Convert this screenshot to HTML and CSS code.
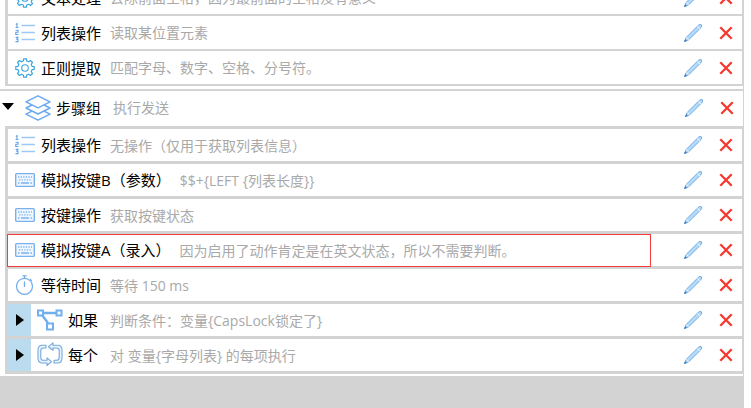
FILE: index.html
```html
<!DOCTYPE html>
<html lang="zh-CN">
<head>
  <meta charset="UTF-8" />
  <meta name="viewport" content="width=device-width, initial-scale=1.0" />
  <title>步骤组</title>
  <link rel="stylesheet" href="styles.css">
</head>
<body>
  <!-- shared icons -->
  <svg class="icon-defs" aria-hidden="true">
    <symbol id="gear" viewBox="0 0 20 20">
      <path d="M8.3 3 L8.6 .8 H11.4 L11.7 3 L13.7 3.8 L15.5 2.5 L17.5 4.5 L16.2 6.3 L17 8.3 L19.2 8.6 V11.4 L17 11.7 L16.2 13.7 L17.5 15.5 L15.5 17.5 L13.7 16.2 L11.7 17 L11.4 19.2 H8.6 L8.3 17 L6.3 16.2 L4.5 17.5 L2.5 15.5 L3.8 13.7 L3 11.7 L.8 11.4 V8.6 L3 8.3 L3.8 6.3 L2.5 4.5 L4.5 2.5 L6.3 3.8 Z" fill="none" stroke="#3aa5e0" stroke-width="1.2" stroke-linejoin="round"/>
      <circle cx="10" cy="10" r="3.3" fill="none" stroke="#3aa5e0" stroke-width="1.1"/>
    </symbol>
    <symbol id="list" viewBox="0 0 20 20">
      <path d="M6.5 2.5H20M6.5 9.5H20M6.5 16.5H20" stroke="#9cc8f6" stroke-width="1.4"/>
      <path d="M.8 1.4L2 .6V4.5M.5 4.5H3.4M.6 7.2H3V9.3H.8V11.5H3.3M.6 14.4H3L1.8 16.2H3V18.6H.5" fill="none" stroke="#5fa4e6" stroke-width="1.1"/>
    </symbol>
    <symbol id="keyboard" viewBox="0 0 20 20">
      <rect x=".7" y="3.6" width="18.6" height="12.8" rx="1" fill="#f0f7ff" stroke="#79b1ed" stroke-width="1.4"/>
      <path d="M3 7H17M4 9.8H17" stroke="#79b1ed" stroke-width="1.3" stroke-dasharray="1.3 1.3"/>
      <path d="M3 13H4.5M6 13H14M15.5 13H17" stroke="#79b1ed" stroke-width="1.3"/>
    </symbol>
    <symbol id="clock" viewBox="0 0 20 20">
      <circle cx="9.5" cy="11.3" r="8" fill="none" stroke="#6faceb" stroke-width="1.2"/>
      <path d="M7.5 .8H11.5M9.5 .8V3.3M9.5 6.5V12M15 4.2L16.8 5.8" fill="none" stroke="#6faceb" stroke-width="1.3"/>
    </symbol>
    <symbol id="layers" viewBox="0 0 26 26">
      <g fill="#fff" stroke="#6baaf0" stroke-width="1.5" stroke-linejoin="round">
        <path d="M13 13.2L25 19.2L13 25.2L1 19.2Z"/>
        <path d="M13 7L25 13L13 19L1 13Z"/>
        <path d="M13 .8L25 6.8L13 12.8L1 6.8Z"/>
      </g>
    </symbol>
    <symbol id="branch" viewBox="0 0 26 26">
      <path d="M6 6H20M5 8L11 16" stroke="#71afef" stroke-width="2.4"/>
      <g fill="#fff" stroke="#71afef" stroke-width="2">
        <rect x="1" y="3.5" width="5" height="5"/>
        <rect x="19.5" y="3.5" width="5" height="5"/>
        <rect x="10" y="16.5" width="6" height="6"/>
      </g>
    </symbol>
    <symbol id="loop" viewBox="0 0 26 26">
      <g fill="#e9f3fd" stroke="#75a9dc" stroke-width="1.1" stroke-linejoin="round">
        <path d="M9 3.2H5.5Q1 3.2 1 8V16Q1 21 5.5 21H10V23.5L14.5 19.7L10 15.9V18.3H6.5Q3.8 18.3 3.8 15.5V8.5Q3.8 6 6.5 6H9Z"/>
        <path d="M17 21H20.5Q25 21 25 16V8Q25 3.2 20.5 3.2H16V.9L11.5 4.7L16 8.3V6H19.5Q22.2 6 22.2 8.5V15.5Q22.2 18.3 19.5 18.3H17Z"/>
      </g>
    </symbol>
    <symbol id="pencil" viewBox="0 0 20 20">
      <path d="M1.5 18.5L3.2 14.4L15.2 2.5Q16.8 .8 18.4 1.8Q19.3 3.2 17.8 4.8L5.7 16.8Z" fill="#b3dbfc" stroke="#74a9dc" stroke-width="1" stroke-linejoin="round"/>
      <path d="M1 19L2.2 16.2L3.9 17.9Z" fill="#3479bd"/>
      <path d="M3.3 14.4L5.7 16.8M14.4 3.4L17 6" stroke="#e9f5ff" stroke-width="1"/>
    </symbol>
    <symbol id="cross" viewBox="0 0 14 14">
      <path d="M1.3 1.3L12.7 12.7M12.7 1.3L1.3 12.7" stroke="#f5382f" stroke-width="2.3"/>
    </symbol>
  </svg>

  <main class="panel">
    <section class="group group-compact">
      <ul class="steps">
        <li class="step">
          <svg class="icon"><use href="#gear"/></svg>
          <span class="name">文本处理</span>
          <span class="desc">去除前面空格，因为最前面的空格没有意义</span>
          <button class="edit" aria-label="编辑"><svg><use href="#pencil"/></svg></button>
          <button class="delete" aria-label="删除"><svg><use href="#cross"/></svg></button>
        </li>
        <li class="step">
          <svg class="icon"><use href="#list"/></svg>
          <span class="name">列表操作</span>
          <span class="desc">读取某位置元素</span>
          <button class="edit" aria-label="编辑"><svg><use href="#pencil"/></svg></button>
          <button class="delete" aria-label="删除"><svg><use href="#cross"/></svg></button>
        </li>
        <li class="step">
          <svg class="icon"><use href="#gear"/></svg>
          <span class="name">正则提取</span>
          <span class="desc">匹配字母、数字、空格、分号符。</span>
          <button class="edit" aria-label="编辑"><svg><use href="#pencil"/></svg></button>
          <button class="delete" aria-label="删除"><svg><use href="#cross"/></svg></button>
        </li>
      </ul>
    </section>

    <section class="group">
      <div class="group-header">
        <button class="toggle open" aria-label="折叠" aria-expanded="true"></button>
        <svg class="icon icon-large"><use href="#layers"/></svg>
        <span class="name">步骤组</span>
        <span class="desc">执行发送</span>
        <button class="edit" aria-label="编辑"><svg><use href="#pencil"/></svg></button>
        <button class="delete" aria-label="删除"><svg><use href="#cross"/></svg></button>
      </div>
      <ul class="steps">
        <li class="step">
          <svg class="icon"><use href="#list"/></svg>
          <span class="name">列表操作</span>
          <span class="desc">无操作（仅用于获取列表信息）</span>
          <button class="edit" aria-label="编辑"><svg><use href="#pencil"/></svg></button>
          <button class="delete" aria-label="删除"><svg><use href="#cross"/></svg></button>
        </li>
        <li class="step">
          <svg class="icon"><use href="#keyboard"/></svg>
          <span class="name">模拟按键B（参数）</span>
          <span class="desc">$$+{LEFT {列表长度}}</span>
          <button class="edit" aria-label="编辑"><svg><use href="#pencil"/></svg></button>
          <button class="delete" aria-label="删除"><svg><use href="#cross"/></svg></button>
        </li>
        <li class="step">
          <svg class="icon"><use href="#keyboard"/></svg>
          <span class="name">按键操作</span>
          <span class="desc">获取按键状态</span>
          <button class="edit" aria-label="编辑"><svg><use href="#pencil"/></svg></button>
          <button class="delete" aria-label="删除"><svg><use href="#cross"/></svg></button>
        </li>
        <li class="step marked">
          <svg class="icon"><use href="#keyboard"/></svg>
          <span class="name">模拟按键A（录入）</span>
          <span class="desc">因为启用了动作肯定是在英文状态，所以不需要判断。</span>
          <button class="edit" aria-label="编辑"><svg><use href="#pencil"/></svg></button>
          <button class="delete" aria-label="删除"><svg><use href="#cross"/></svg></button>
        </li>
        <li class="step">
          <svg class="icon"><use href="#clock"/></svg>
          <span class="name">等待时间</span>
          <span class="desc">等待 150 ms</span>
          <button class="edit" aria-label="编辑"><svg><use href="#pencil"/></svg></button>
          <button class="delete" aria-label="删除"><svg><use href="#cross"/></svg></button>
        </li>
        <li class="step nested">
          <button class="toggle" aria-label="展开" aria-expanded="false"></button>
          <svg class="icon icon-large"><use href="#branch"/></svg>
          <span class="name">如果</span>
          <span class="desc">判断条件：变量{CapsLock锁定了}</span>
          <button class="edit" aria-label="编辑"><svg><use href="#pencil"/></svg></button>
          <button class="delete" aria-label="删除"><svg><use href="#cross"/></svg></button>
        </li>
        <li class="step nested">
          <button class="toggle" aria-label="展开" aria-expanded="false"></button>
          <svg class="icon icon-large"><use href="#loop"/></svg>
          <span class="name">每个</span>
          <span class="desc">对 变量{字母列表} 的每项执行</span>
          <button class="edit" aria-label="编辑"><svg><use href="#pencil"/></svg></button>
          <button class="delete" aria-label="删除"><svg><use href="#cross"/></svg></button>
        </li>
      </ul>
    </section>
  </main>
</body>
</html>
```

FILE: styles.css
```css
* {
  box-sizing: border-box;
}

body {
  display: flex;
  min-height: 100vh;
  margin: 0;
  padding-right: 7px;
  overflow: hidden;
  background-color: #fff;
  font-family: "Open Sans", "Noto Sans CJK SC", sans-serif;
}

.icon-defs {
  position: absolute;
  width: 0;
  height: 0;
}

/* list is scrolled part of the way into the first step */
.panel {
  flex: 1;
  margin-top: -19px;
  background-color: #d3d3d3;
}

.group {
  padding-bottom: 2px;
  border-right: 1px solid #d3d3d3;
  background-color: #fff;
}

.group-header {
  display: flex;
  align-items: center;
  height: 37px;
  padding: 0 9px 2px 0;
  border-top: 2px solid #d3d3d3;
}

.steps {
  display: grid;
  gap: 3px;
  margin: 0 0 0 5px;
  padding: 3px 1px 3px 3px;
  list-style: none;
  background-color: #d3d3d3;
}

.step {
  position: relative;
  display: flex;
  align-items: center;
  height: 32px;
  padding: 0 9px 0 7px;
  background-color: #fff;
}

.group-compact {
  padding-bottom: 3px;
}

.group-compact .steps {
  gap: 2px;
  padding-top: 0;
  padding-bottom: 2px;
}

.group-compact .step {
  height: 33px;
}

.icon {
  flex: none;
  width: 20px;
  height: 20px;
  margin-right: 6px;
}

.icon-large {
  width: 26px;
  height: 26px;
  margin-right: 5px;
}

.name {
  margin-right: 9px;
  font-size: 15px;
  line-height: 24px;
  color: #000;
  white-space: nowrap;
}

.desc {
  flex: 1;
  padding-top: 1px;
  font-size: 14px;
  line-height: 24px;
  color: #a9a9a9;
  white-space: nowrap;
}

.group-header .name,
.nested .name {
  margin-right: 12px;
}

button {
  display: flex;
  flex: none;
  padding: 0;
  border: none;
  background: none;
  cursor: pointer;
}

.edit svg {
  width: 20px;
  height: 20px;
}

.delete {
  margin-left: 16px;
}

.delete svg {
  width: 14px;
  height: 14px;
}

.toggle {
  align-items: center;
  justify-content: center;
  align-self: stretch;
  width: 23px;
  margin-right: 6px;
  background-color: #badcee;
}

.toggle::before {
  content: "";
  border-left: 8px solid #000;
  border-top: 6px solid transparent;
  border-bottom: 6px solid transparent;
}

.toggle.open {
  width: 15px;
  margin-right: 10px;
  padding-bottom: 3px;
  background: none;
}

.toggle.open::before {
  border-top: 7px solid #000;
  border-right: 6px solid transparent;
  border-bottom: none;
  border-left: 6px solid transparent;
}

.nested {
  padding-left: 0;
}

/* red frame over the step that needs attention */
.marked::after {
  content: "";
  position: absolute;
  top: 0;
  right: 91px;
  bottom: -1px;
  left: -1px;
  border: 1px solid #f33b3b;
  pointer-events: none;
}
```
